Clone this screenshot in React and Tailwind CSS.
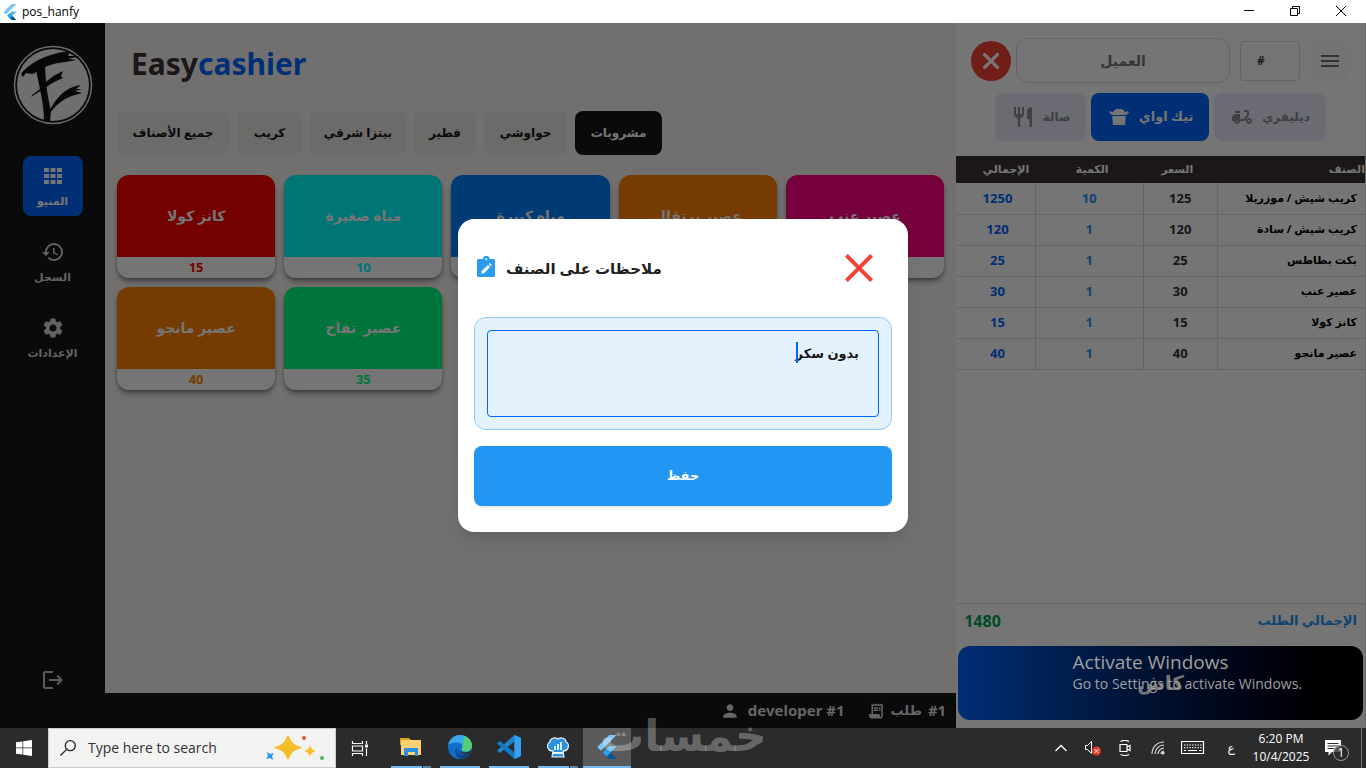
import React, { useState } from 'react'
import {
  MdHistory,
  MdSettings,
  MdLogout,
  MdMenu,
  MdClose,
  MdPerson,
  MdReceiptLong,
  MdDeliveryDining,
  MdTakeoutDining,
  MdRestaurant,
} from 'react-icons/md'
import { FaXmark } from 'react-icons/fa6'

const CATEGORIES = [
  { name: 'جميع الأصناف', width: 'w-[112px]' },
  { name: 'كريب', width: 'w-[65px]' },
  { name: 'بيتزا شرقي', width: 'w-[96px]' },
  { name: 'فطير', width: 'w-[62px]' },
  { name: 'حواوشي', width: 'w-[83px]' },
  { name: 'مشروبات', width: 'w-[87px]' },
]

const PRODUCTS = [
  { name: 'كانز كولا', price: 15, bg: 'bg-[#ff0000]', text: 'text-[#ff0000]' },
  { name: 'مياه صغيرة', price: 10, bg: 'bg-[#00ffff]', text: 'text-[#00ffff]' },
  { name: 'مياه كبيرة', price: 15, bg: 'bg-[#0080ff]', text: 'text-[#0080ff]' },
  { name: 'عصير برتقال', price: 35, bg: 'bg-[#ff8000]', text: 'text-[#ff8000]' },
  { name: 'عصير عنب', price: 30, bg: 'bg-[#ff0080]', text: 'text-[#ff0080]' },
  { name: 'عصير مانجو', price: 40, bg: 'bg-[#ff8000]', text: 'text-[#ff8000]' },
  { name: 'عصير  تفاح', price: 35, bg: 'bg-[#00ff80]', text: 'text-[#00ff80]' },
]

const ORDER = [
  { name: 'كريب شيش / موزريلا', price: 125, qty: 10, total: 1250 },
  { name: 'كريب شيش / سادة', price: 120, qty: 1, total: 120 },
  { name: 'بكت بطاطس', price: 25, qty: 1, total: 25 },
  { name: 'عصير عنب', price: 30, qty: 1, total: 30 },
  { name: 'كانز كولا', price: 15, qty: 1, total: 15 },
  { name: 'عصير مانجو', price: 40, qty: 1, total: 40 },
]

const FlutterLogo = ({ className }) => (
  <svg className={className} viewBox="0 0 24 24">
    <path d="M14.3 0L2.3 12 6 15.7 21.7 0z" fill="#7cc4fa" />
    <path d="M14.4 11.1L7.9 17.5l3.8 3.8 10-10.2z" fill="#54b4f5" />
    <path d="M11.7 21.3l2.7 2.7h7.3l-6.3-6.4z" fill="#01579b" />
    <path d="M7.9 17.5l3.8-3.7 3.7 3.8-3.7 3.7z" fill="#29a3ec" />
  </svg>
)

const BrushLogo = () => (
  <svg className="w-20 h-20" viewBox="0 0 80 80">
    <circle cx="40" cy="40" r="38.5" fill="#161616" stroke="#e8e8e8" strokeWidth="1.5" />
    <circle cx="40" cy="40" r="36" fill="#f2f2f2" />
    <g fill="#111">
      <path d="M8 29C17 17 36 8 58 6l-3 5 12 0-12 3 9 1-11 2c-12 1-18 3-28 9l-5 3-7-1-3 4z" />
      <path d="M23 24l9-3c1 22 3 32 6 45l-1 11c-3 0-5-1-6-2C31 58 26 42 23 24z" />
      <path d="M18 51l9-7c6-8 12-13 23-18l-2 5 2 2c-8 3-14 7-21 12l-11 7 3-4z" />
      <path d="M34 72c7-18 18-30 34-32l-5 4 6 0-7 2 7 2-7 2c-11 3-20 10-28 22z" />
    </g>
  </svg>
)

function NavItem({ icon, label, active }) {
  return (
    <button
      className={`w-[60px] h-[60px] pt-2 rounded-lg flex flex-col items-center gap-1 ${
        active ? 'bg-[#0066ff] text-white' : 'text-[#d8d8d8]'
      }`}
    >
      <span className="h-6 flex items-center">{icon}</span>
      <span className="text-[11px] leading-[18px] font-bold whitespace-nowrap">{label}</span>
    </button>
  )
}

function Sidebar() {
  return (
    <aside className="w-[105px] shrink-0 bg-[#161616] flex flex-col items-center pt-[22px] pb-9">
      <BrushLogo />
      <nav className="flex flex-col gap-4 mt-[31px]">
        <NavItem
          active
          label="المنيو"
          icon={
            <svg className="w-[18px] h-[18px]" viewBox="0 0 18 18" fill="currentColor">
              <path d="M0 1h5v4H0zM6.5 1h5v4h-5zM13 1h5v4h-5zM0 7h5v4H0zM6.5 7h5v4h-5zM13 7h5v4h-5zM0 13h5v4H0zM6.5 13h5v4h-5zM13 13h5v4h-5z" />
            </svg>
          }
        />
        <NavItem label="السجل" icon={<MdHistory size={24} />} />
        <NavItem label="الإعدادات" icon={<MdSettings size={24} />} />
      </nav>
      <button className="mt-auto text-[#c8c8c8]" aria-label="تسجيل الخروج">
        <MdLogout size={24} />
      </button>
    </aside>
  )
}

function ProductCard({ product }) {
  return (
    <button className="rounded-xl overflow-hidden bg-white shadow-md shadow-black/40 flex flex-col">
      <span
        className={`w-full h-[82px] flex items-center justify-center text-sm font-bold text-white whitespace-pre ${product.bg}`}
      >
        {product.name}
      </span>
      <span className={`w-full h-[21px] text-center text-[13px] leading-[21px] font-bold ${product.text}`}>
        {product.price}
      </span>
    </button>
  )
}

function Menu() {
  const [active, setActive] = useState('مشروبات')

  return (
    <main className="flex-1 min-w-0 bg-[#f8f5f1] px-3 pt-5">
      <h1 className="pl-[14px] text-[30px] leading-[42px] font-bold text-[#3b3436]">
        Easy<span className="text-[#0066ff]">cashier</span>
      </h1>
      <div className="flex gap-2 mt-[26px]">
        {CATEGORIES.map((c) => (
          <button
            key={c.name}
            onClick={() => setActive(c.name)}
            className={`h-11 rounded-lg text-xs font-bold whitespace-nowrap ${c.width} ${
              active === c.name ? 'bg-[#161616] text-white' : 'bg-[#e9e9e6] text-[#161616]'
            }`}
          >
            {c.name}
          </button>
        ))}
      </div>
      <div className="grid grid-cols-5 gap-[9px] mt-5">
        {PRODUCTS.map((p) => (
          <ProductCard key={p.name} product={p} />
        ))}
      </div>
    </main>
  )
}

function StatusBar() {
  return (
    <footer className="h-[35px] shrink-0 bg-[#161616] text-[#dedede] flex items-center justify-end gap-[22px] pr-[10px] text-[15px] font-bold">
      <span className="flex items-center gap-2">
        <MdPerson size={20} />
        developer #1
      </span>
      <span className="flex items-center gap-[6px]">
        <MdReceiptLong size={18} />
        <span className="text-[13px]">طلب</span>
        <span>#1</span>
      </span>
    </footer>
  )
}

function OrderPanel() {
  return (
    <section className="w-[30%] shrink-0 bg-white border-r border-[#ddd] flex flex-col">
      <div className="flex items-center pt-[15px] px-[15px]">
        <button
          className="w-10 h-10 shrink-0 rounded-full bg-[#f44336] text-white flex items-center justify-center"
          aria-label="إلغاء الطلب"
        >
          <FaXmark size={26} />
        </button>
        <button className="flex-1 h-[45px] ml-[5px] rounded-xl border border-[#dcdcdc] text-sm font-bold text-[#777]">
          العميل
        </button>
        <input
          className="w-[60px] h-10 ml-[10px] pl-4 rounded border border-[#dcdcdc] text-xs font-bold text-[#444] placeholder:text-[#444]"
          placeholder="#"
          aria-label="رقم الطلب"
        />
        <button
          className="w-10 h-10 ml-[10px] rounded-lg bg-[#f9faff] text-[#6f6f6f] flex items-center justify-center"
          aria-label="القائمة"
        >
          <MdMenu size={24} />
        </button>
      </div>

      <div className="flex justify-center gap-[5px] mt-[10px] text-xs font-bold">
        <button className="w-[91px] h-12 rounded-lg bg-[#eaebfa] text-[#8c8c8c] flex items-center justify-center gap-2">
          <MdRestaurant size={24} />
          صالة
        </button>
        <button className="w-[118px] h-12 rounded-lg bg-[#0066ff] text-[13px] text-white flex items-center justify-center gap-2">
          <MdTakeoutDining size={24} />
          تيك اواي
        </button>
        <button className="w-[112px] h-12 rounded-lg bg-[#eaebfa] text-[#8c8c8c] flex items-center justify-center gap-2">
          <MdDeliveryDining size={24} />
          ديليفري
        </button>
      </div>

      <table dir="rtl" className="w-full table-fixed mt-[15px] text-[11px] font-bold border-collapse">
        <thead>
          <tr className="h-[27px] bg-[#3b3436] text-white">
            <th className="text-right">الصنف</th>
            <th className="w-[74px] pr-[6px]">السعر</th>
            <th className="w-[108px] pl-[6px]">الكمية</th>
            <th className="w-[79px] pr-[6px] text-right">الإجمالي</th>
          </tr>
        </thead>
        <tbody>
          {ORDER.map((item) => (
            <tr key={item.name} className="h-[31px] border-b border-[#dcdcdc] text-center">
              <td className="pr-2 text-right text-black whitespace-nowrap">{item.name}</td>
              <td className="border-r border-[#dcdcdc] text-[13px] text-[#333]">{item.price}</td>
              <td className="border-r border-[#dcdcdc] text-[13px] text-[#2196f3]">{item.qty}</td>
              <td className="border-r border-[#dcdcdc] pl-[-6px] pl-1 text-[13px] text-[#0066ff]">{item.total}</td>
            </tr>
          ))}
        </tbody>
      </table>

      <div className="mt-auto h-[43px] border-t border-[#dcdcdc] px-2 pb-2 flex items-center justify-between font-bold">
        <span className="text-base text-[#00a651]">1480</span>
        <span className="text-[13px] text-[#2196f3]">الإجمالي الطلب</span>
      </div>
      <button className="h-[74px] mx-[2px] mb-2 rounded-xl bg-linear-to-r from-[#0066ff] to-black text-white text-xl font-bold">
        كاش
      </button>
    </section>
  )
}

function NotesDialog() {
  const [note, setNote] = useState('بدون سكر')

  return (
    <div className="absolute inset-0 bg-black/54 flex items-center justify-center">
      <div
        role="dialog"
        aria-labelledby="notes-title"
        className="w-[450px] rounded-2xl bg-white px-4 pt-4 pb-[26px] shadow-lg"
      >
        <div className="h-[66px] flex items-center justify-between">
          <div className="flex items-center gap-2">
            <svg className="w-6 h-6" viewBox="0 0 24 24" fill="#2b9bf0">
              <path d="M19.5 3H15.5a3 3 0 0 0-6.500 0H4.500A1.500 1.500 0 0 0 3 4.500v15A1.500 1.500 0 0 0 4.500 21h15a1.500 1.500 0 0 0 1.500-1.500v-15A1.500 1.500 0 0 0 19.500 3z" />
              <circle cx="12.2" cy="3.3" r="1" fill="#fff" />
              <path d="M7.5 17.5v-2.200l6.400-6.400 2.200 2.200-6.400 6.400zM14.700 8.100l1.100-1.100 2.200 2.200-1.100 1.100z" fill="#fff" />
            </svg>
            <h2 id="notes-title" className="text-[15px] font-bold text-[#212121]">
              ملاحظات على الصنف
            </h2>
          </div>
          <button className="mr-[9px] text-[#f44336]" aria-label="إغلاق">
            <MdClose size={48} />
          </button>
        </div>

        <div className="relative mt-4 p-3 rounded-xl border border-[#90caf9] bg-[#e3f2fd]">
          <textarea
            dir="rtl"
            aria-labelledby="notes-title"
            value={note}
            onChange={(e) => setNote(e.target.value)}
            className="block w-full h-[87px] px-[19px] py-3 rounded border border-[#0066ff] text-[13px] leading-5 font-bold text-[#161616] resize-none outline-none"
          />
          <span className="absolute top-6 right-[93px] w-[2px] h-[21px] bg-[#0066ff]" />
        </div>

        <button className="mt-4 w-full h-[60px] rounded-lg bg-[#2196f3] text-white text-[13px] font-bold shadow-sm">
          حفظ
        </button>
      </div>
    </div>
  )
}

function TitleBar() {
  return (
    <header className="h-[23px] shrink-0 bg-white flex items-center pl-[2px] pr-[19px] text-xs text-black font-['Open_Sans',sans-serif]">
      <FlutterLogo className="w-4 h-4 mr-1" />
      <span>pos_hanfy</span>
      <div className="ml-auto flex items-center gap-[34px]">
        <button aria-label="Minimize">
          <svg className="w-3 h-3" viewBox="0 0 12 12" stroke="#000" fill="none">
            <path d="M1 4.5h10" />
          </svg>
        </button>
        <button aria-label="Restore">
          <svg className="w-3 h-3" viewBox="0 0 12 12" stroke="#000" fill="none">
            <path d="M1.5 2.5h7v7h-7zM3.5 2.5v-2h7v7h-2" />
          </svg>
        </button>
        <button aria-label="Close">
          <svg className="w-3 h-3" viewBox="0 0 12 12" stroke="#000" fill="none">
            <path d="M1 0l10 10M11 0L1 10" />
          </svg>
        </button>
      </div>
    </header>
  )
}

function TaskbarApp({ label, active, stacked, children }) {
  return (
    <button
      aria-label={label}
      className={`w-12 h-10 flex flex-col items-center ${active ? 'bg-[#5a5a5a]' : ''}`}
    >
      <span className="flex-1 flex items-center">{children}</span>
      <span className={`h-[2px] flex gap-px ${active ? 'w-full' : 'w-10'}`}>
        <span className="flex-1 bg-[#76b9ed]" />
        {stacked && <span className="w-2 bg-[#5484a8]" />}
      </span>
    </button>
  )
}

function Taskbar() {
  return (
    <div className="h-10 shrink-0 bg-[#2b2b2b] text-white flex items-center font-['Open_Sans','DejaVu_Sans',sans-serif]">
      <button className="w-12 h-10 flex items-center justify-center" aria-label="Start">
        <svg className="w-4 h-4" viewBox="0 0 16 16" fill="#fff">
          <path d="M0 2.3l6.5-.9v6.2H0zM7.2 1.3L16 0v7.6H7.2zM0 8.3h6.5v6.3L0 13.7zM7.2 8.3H16V16l-8.8-1.300z" />
        </svg>
      </button>
      <label className="w-[288px] h-10 px-[11px] bg-[#f2f2f1] border border-[#ccc] flex items-center text-[#333]">
        <svg className="w-4 h-4 shrink-0" viewBox="0 0 16 16" fill="none" stroke="#222" strokeWidth="1.3">
          <circle cx="10.3" cy="5.7" r="5" />
          <path d="M6.6 9.4L.5 15.5" />
        </svg>
        <input
          className="w-[176px] ml-3 text-sm outline-none placeholder:text-[#333]"
          placeholder="Type here to search"
        />
        <svg className="w-[62px] h-7 shrink-0" viewBox="0 0 62 28">
          <path d="M24 2q2 8.500 12 11.500-10 3-12 11.500-2-8.500-12-11.500Q22 10.500 24 2z" fill="#f5bd27" stroke="#f5bd27" strokeWidth="1.5" />
          <path d="M46 11q1 5 6 6-5 1-6 6-1-5-6-6 5-1 6-6z" fill="#f5bd27" />
          <path d="M3 18l3 2 4-1-2 3 1 4-3-2-4 1 2-3z" fill="#2196f3" />
          <circle cx="40" cy="4" r="2" fill="#ea4c2d" />
          <circle cx="58" cy="24" r="2" fill="#4ab866" />
        </svg>
      </label>
      <button className="w-12 h-10 mr-[3px] flex items-center justify-center" aria-label="Task view">
        <svg className="w-[18px] h-[18px]" viewBox="0 0 18 18" fill="none" stroke="#fff" strokeWidth="1.2">
          <path d="M1.5 2V4.500h10V2M1.5 7h10v5h-10zM1.5 17v-2.500h10V17M15.5 2v3M15.5 9.500V17" />
          <path d="M14 5.500h3v3h-3z" fill="#fff" stroke="none" />
        </svg>
      </button>
      <div className="flex gap-px">
        <TaskbarApp label="File Explorer" stacked>
          <svg className="w-6 h-6" viewBox="0 0 24 24">
            <path d="M1 3h9l2 2h10v5H1z" fill="#e0a11a" />
            <path d="M2 5h20v15H2z" fill="#fbd174" />
            <path d="M5 13h14v8h-3v-4H9v4H5z" fill="#2d8fe0" />
          </svg>
        </TaskbarApp>
        <TaskbarApp label="Microsoft Edge">
          <svg className="w-6 h-6" viewBox="0 0 24 24">
            <circle cx="12" cy="12" r="12" fill="#0f70cc" />
            <path d="M.3 9.500C1.500 4 6.200 0 12 0c7 0 12 5 12 10.500 0 4-3 6-6 6-3.500 0-5-1.500-4-3 1-3-.5-5.500-4-6C6 7 2 8.500.3 9.500z" fill="#38a8e8" />
            <path d="M16 1c5 2 8 5.500 8 9.500 0 4-3 6-6 6-3.500 0-5-1.500-4-3 2-4 1-8 2-12.500z" fill="#56cf73" />
            <path d="M9 12c-2 5 3 10 13.300 6.300C20 22 16 24 12.500 24 7 22 6 15 9 12z" fill="#0b478f" />
            <path d="M10 11c-1 3 1 6 5 6.500 3 .3 6-.5 8-2.500l-.7 3.300C15 21 8 17 10 11z" fill="#2b2b2b" />
          </svg>
        </TaskbarApp>
        <TaskbarApp label="Visual Studio Code">
          <svg className="w-6 h-6" viewBox="0 0 24 24">
            <path d="M17.5 0L24 3v18l-6.500 3V6.500L3 18 0 15.500z" fill="#1f84cd" />
            <path d="M17.5 24L0 8.500 3 6l14.500 11.500z" fill="#147ac4" />
            <path d="M17.5 0L24 3v18l-6.500 3z" fill="#36a1f0" />
          </svg>
        </TaskbarApp>
        <TaskbarApp label="POS" stacked>
          <svg className="w-6 h-6" viewBox="0 0 24 24" stroke="#e8f2fa" strokeWidth="1.2">
            <path d="M7 16C1 16 0 9 4 7c0-4 5-5 8-3 3-2 8-1 8 3 4 2 3 9-3 9l1 6H6z" fill="#2b93dd" />
            <path d="M9 15v-4M12 15V9M15 15V7M7 18h10" fill="none" strokeWidth="1.8" />
          </svg>
        </TaskbarApp>
        <TaskbarApp label="pos_hanfy" active>
          <FlutterLogo className="w-6 h-6" />
        </TaskbarApp>
      </div>

      <div className="ml-auto flex items-center text-xs">
        <svg className="w-3 h-3 mr-[17px]" viewBox="0 0 12 12" fill="none" stroke="#fff" strokeWidth="1.3">
          <path d="M.5 9L6 3.500 11.500 9" />
        </svg>
        <svg className="w-[18px] h-4 mr-[17px]" viewBox="0 0 18 16" fill="none">
          <path d="M1.5 5.500h2l4-4v12l-4-4h-2z" stroke="#fff" />
          <circle cx="12.5" cy="11" r="4.5" fill="#e8392b" />
          <path d="M10.5 9l4 4M14.5 9l-4 4" stroke="#fff" />
        </svg>
        <svg className="w-3 h-4 mr-[20px]" viewBox="0 0 12 16" fill="none" stroke="#fff" strokeWidth="1.2">
          <path d="M1.5 1.500Q6-.5 10 1.500M1.5 14.500Q6 16.500 10 14.500M1 4.500h7v7H1zM8 7l3-1.500v5L8 9" />
        </svg>
        <svg className="w-[14px] h-[14px] mr-[16px]" viewBox="0 0 14 14" fill="none" stroke="#ddd" strokeWidth="1.2">
          <path d="M1 13C1 6 6 1 13 1M4 13c0-5 4-9 9-9M7 13c0-3 3-6 6-6M10 13c0-1.500 1.500-3 3-3" />
          <circle cx="12" cy="12" r="1" fill="#fff" />
        </svg>
        <svg className="w-6 h-[14px] mr-[18px]" viewBox="0 0 24 14" fill="none" stroke="#fff">
          <path d="M.5.5h22v12H.5z" strokeWidth="1.2" />
          <path d="M3 4h18M3 6.700h18" strokeDasharray="1.5 1.2" />
          <path d="M3 9.500h2M7 9.500h9M18 9.500h2.500" />
        </svg>
        <span className="w-4 text-center">ع</span>
        <div className="w-[84px] text-center text-xs leading-[18px]">
          <div>6:20 PM</div>
          <div>10/4/2025</div>
        </div>
        <button className="w-[30px] h-6 ml-[2px] mr-[6px] relative" aria-label="Notifications">
          <svg className="w-4 h-4" viewBox="0 0 16 16">
            <path d="M0 0h16v12h-9l-3.500 3.500V12H0z" fill="#fff" />
            <path d="M2.5 3.500h11M2.5 6h11M2.5 8.500h7" stroke="#2b2b2b" />
          </svg>
          <span className="absolute left-2 top-[9px] w-4 h-4 rounded-full border border-[#999] bg-[#2b2b2b]/80 text-xs leading-[14px] text-center">
            1
          </span>
        </button>
        <span className="w-px h-10 mr-1 bg-[#777]" />
      </div>
    </div>
  )
}

export default function App() {
  return (
    <div className="relative h-screen flex flex-col overflow-hidden font-['Noto_Sans','DejaVu_Sans',sans-serif]">
      <TitleBar />
      <div className="relative flex-1 min-h-0 flex">
        <Sidebar />
        <div className="flex-1 min-w-0 flex flex-col">
          <Menu />
          <StatusBar />
        </div>
        <OrderPanel />
        <NotesDialog />
      </div>
      <Taskbar />

      {/* Overlays drawn above every window */}
      <div className="absolute right-16 bottom-[74px] text-[#a0a0a0] pointer-events-none font-['Open_Sans',sans-serif]">
        <div className="text-[19px] leading-6">Activate Windows</div>
        <div className="text-sm leading-5">Go to Settings to activate Windows.</div>
      </div>
      <div
        dir="rtl"
        className="absolute left-[600px] bottom-[14px] text-[44px] leading-10 font-bold text-white/30 pointer-events-none"
      >
        خمسات
      </div>
    </div>
  )
}
